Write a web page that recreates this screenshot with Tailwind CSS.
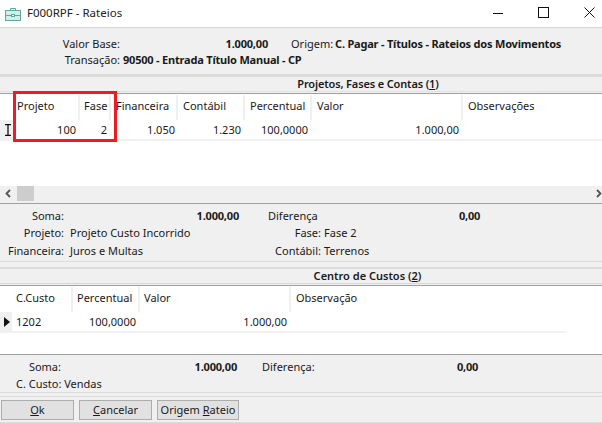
<!DOCTYPE html>
<html lang="pt-BR">
<head>
  <meta charset="UTF-8" />
  <title>F000RPF - Rateios</title>
  <script src="https://cdn.jsdelivr.net/npm/@tailwindcss/browser@4"></script>
</head>
<body class="w-[602px] h-[423px] overflow-hidden bg-[#f0f0f0] text-[11px] leading-[14px] text-[#1a1a1a] font-['Noto_Sans','Liberation_Sans',sans-serif]">
  <div class="relative flex flex-col h-[423px]">

    <!-- title bar -->
    <header class="h-[28px] bg-white border-b border-[#d8d8d8] flex items-center shrink-0">
      <svg class="ml-[5px] w-[16px] h-[16px]" viewBox="0 0 16 16" fill="none" stroke="#5fa89c" stroke-width="1">
        <rect x="0.5" y="4.5" width="15" height="10" fill="#d6ece8"/>
        <path d="M5.500 4.500V2.500h5v2M0.500 9.500h15"/>
        <rect x="6.500" y="8.500" width="3" height="2" fill="#fff"/>
      </svg>
      <span class="ml-[6px] text-[11.5px] text-[#222] -mt-[2px]">F000RPF - Rateios</span>
      <div class="ml-auto flex items-center -mt-[2px]">
        <svg class="w-[12px] h-[12px]" viewBox="0 0 12 12" stroke="#111" fill="none"><path d="M1 6.500h10"/></svg>
        <svg class="ml-[34px] w-[11px] h-[11px]" viewBox="0 0 11 11" stroke="#111" fill="none"><rect x="0.5" y="0.5" width="10" height="10"/></svg>
        <svg class="ml-[35px] mr-[7px] w-[11px] h-[11px]" viewBox="0 0 11 11" stroke="#111" fill="none"><path d="M0.500 0.500l10 10M10.500 0.500l-10 10"/></svg>
      </div>
    </header>

    <!-- cabecalho -->
    <section class="h-[46px] shrink-0 pt-[8px] grid grid-cols-[120px_148px_23px_1fr] auto-rows-[16px] items-center">
      <div class="text-right">Valor Base:</div>
      <div class="text-right font-bold tracking-[-0.2px]">1.000,00</div>
      <div></div>
      <div>Origem: <b class="-ml-px tracking-[-0.2px]">C. Pagar - Títulos - Rateios dos Movimentos</b></div>
      <div class="text-right">Transação:</div>
      <div class="col-span-3 pl-[3px] font-bold tracking-[-0.2px]">90500 - Entrada Título Manual - CP</div>
    </section>

    <div class="h-[3px] bg-[#dcdcdc] shrink-0"></div>
    <div class="h-[14px] shrink-0 text-center font-semibold pl-[134px] tracking-[-0.15px]">Projetos, Fases e Contas (<u>1</u>)</div>
    <div class="h-[3px] border-t border-t-[#e0e0e0] border-b border-b-[#a0a0a0] shrink-0"></div>

    <!-- grid 1 -->
    <section class="h-[107px] shrink-0 bg-white">
      <div class="h-[26px] pt-[1px] grid grid-cols-[14px_66px_31px_67px_67px_67px_151px_1fr]">
        <div></div>
        <div class="pl-[3px] pt-[4px] border-r-2 border-[#f0f0f0]">Projeto</div>
        <div class="pl-[4px] pt-[4px] border-r-2 border-[#f0f0f0]">Fase</div>
        <div class="pl-[5px] pt-[4px] border-r-2 border-[#f0f0f0]">Financeira</div>
        <div class="pl-[5px] pt-[4px] border-r-2 border-[#f0f0f0]">Contábil</div>
        <div class="pl-[5px] pt-[4px] border-r-2 border-[#f0f0f0]">Percentual</div>
        <div class="pl-[5px] pt-[4px] border-r-2 border-[#f0f0f0]">Valor</div>
        <div class="pl-[5px] pt-[4px]">Observações</div>
      </div>
      <div class="h-[21px] grid grid-cols-[14px_66px_31px_67px_67px_67px_151px_1fr] items-center border-b-2 border-[#f2f2f2]">
        <div class="h-[20px] bg-[#f0f0f0] flex items-center justify-center">
          <svg class="w-[8px] h-[12px] ml-[1px]" viewBox="0 0 8 12" fill="none" stroke="#111" stroke-width="1.3"><path d="M1 .7h6M1 11.3h6M4 .7v10.600"/></svg>
        </div>
        <div class="text-right pr-[4px]">100</div>
        <div class="text-right pr-[4px]">2</div>
        <div class="text-right pr-[3px]">1.050</div>
        <div class="text-right pr-[4px]">1.230</div>
        <div class="text-right pr-[4px]">100,0000</div>
        <div class="text-right pr-[4px]">1.000,00</div>
        <div></div>
      </div>
      <!-- scrollbar -->
      <div class="mt-[45px] h-[15px] bg-[#f0f0f0] flex items-center">
        <svg class="ml-[5px] w-[6px] h-[9px]" viewBox="0 0 6 9" fill="none" stroke="#555" stroke-width="1.8"><path d="M5 1L1.500 4.500 5 8"/></svg>
        <div class="ml-[6px] w-[17px] h-[15px] bg-[#cdcdcd]"></div>
        <svg class="ml-auto w-[6px] h-[9px]" viewBox="0 0 6 9" fill="none" stroke="#555" stroke-width="1.8"><path d="M1 1l3.500 3.500L1 8"/></svg>
      </div>
    </section>

    <div class="h-[1px] mt-[2px] bg-[#a0a0a0] shrink-0"></div>

    <!-- totais 1 -->
    <section class="h-[57px] shrink-0 pt-[3px] grid grid-cols-[64px_175px_82px_1fr] auto-rows-[17.500px] items-center">
      <div class="text-right">Soma:</div>
      <div class="text-right font-bold tracking-[-0.2px]">1.000,00</div>
      <div class="pl-[29px]">Diferença</div>
      <div class="pl-[138px] font-bold tracking-[-0.2px]">0,00</div>
      <div class="text-right">Projeto:</div>
      <div class="pl-[6px]">Projeto Custo Incorrido</div>
      <div class="text-right">Fase:</div>
      <div class="pl-[3px]">Fase 2</div>
      <div class="text-right">Financeira:</div>
      <div class="pl-[6px]">Juros e Multas</div>
      <div class="text-right">Contábil:</div>
      <div class="pl-[3px]">Terrenos</div>
    </section>

    <div class="h-[1px] bg-[#dcdcdc] shrink-0"></div>
    <div class="h-[2px] mt-[5px] bg-[#dcdcdc] shrink-0"></div>
    <div class="h-[14px] shrink-0 text-center font-semibold pl-[133px]">Centro de Custos (<u>2</u>)</div>
    <div class="h-[3px] border-t border-t-[#d8d8d8] border-b border-b-[#a0a0a0] shrink-0"></div>

    <!-- grid 2 -->
    <section class="h-[68px] shrink-0 bg-white">
      <div class="h-[26px] pt-[1px] grid grid-cols-[12px_61px_67px_151px_1fr]">
        <div></div>
        <div class="pl-[4px] pt-[4px] border-r-2 border-[#f0f0f0]">C.Custo</div>
        <div class="pl-[4px] pt-[4px] border-r-2 border-[#f0f0f0]">Percentual</div>
        <div class="pl-[4px] pt-[4px] border-r-2 border-[#f0f0f0]">Valor</div>
        <div class="pl-[5px] pt-[4px]">Observação</div>
      </div>
      <div class="h-[21px] w-[566px] grid grid-cols-[12px_61px_67px_151px_1fr] items-center border-b-2 border-[#f2f2f2]">
        <div class="h-[20px] bg-[#f0f0f0] flex items-center justify-center">
          <svg class="w-[6px] h-[10px] ml-[1px]" viewBox="0 0 6 10" fill="#111"><path d="M0 0l6 5-6 5z"/></svg>
        </div>
        <div class="pl-[4px]">1202</div>
        <div class="text-right pr-[4px]">100,0000</div>
        <div class="text-right pr-[4px]">1.000,00</div>
        <div></div>
      </div>
    </section>

    <div class="h-[1px] bg-[#a0a0a0] shrink-0"></div>

    <!-- totais 2 -->
    <section class="h-[37px] shrink-0 pt-[3px] grid grid-cols-[61px_176px_109px_1fr] auto-rows-[17px] items-center">
      <div class="text-right">Soma:</div>
      <div class="text-right font-bold tracking-[-0.2px]">1.000,00</div>
      <div class="pl-[25px]">Diferença:</div>
      <div class="pl-[111px] font-bold tracking-[-0.2px]">0,00</div>
      <div class="col-span-4 pl-[16px]">C. Custo: Vendas</div>
    </section>

    <div class="h-[1px] bg-[#dcdcdc] shrink-0"></div>
    <div class="h-[1px] mt-[3px] bg-[#dcdcdc] shrink-0"></div>

    <!-- botoes -->
    <footer class="h-[26px] pt-[3px] pl-[1px] flex gap-[5px] shrink-0 border-b border-[#dcdcdc]">
      <button class="w-[73px] h-[20px] bg-[#e1e1e1] border border-[#adadad]"><u>O</u>k</button>
      <button class="w-[73px] h-[20px] bg-[#e1e1e1] border border-[#adadad]"><u>C</u>ancelar</button>
      <button class="w-[82px] h-[20px] bg-[#e1e1e1] border border-[#adadad]">Origem <u>R</u>ateio</button>
    </footer>

    <!-- destaque vermelho -->
    <div class="absolute left-[13px] top-[91px] w-[104px] h-[51px] border-[3px] border-[#ed1c24]"></div>
  </div>
</body>
</html>
